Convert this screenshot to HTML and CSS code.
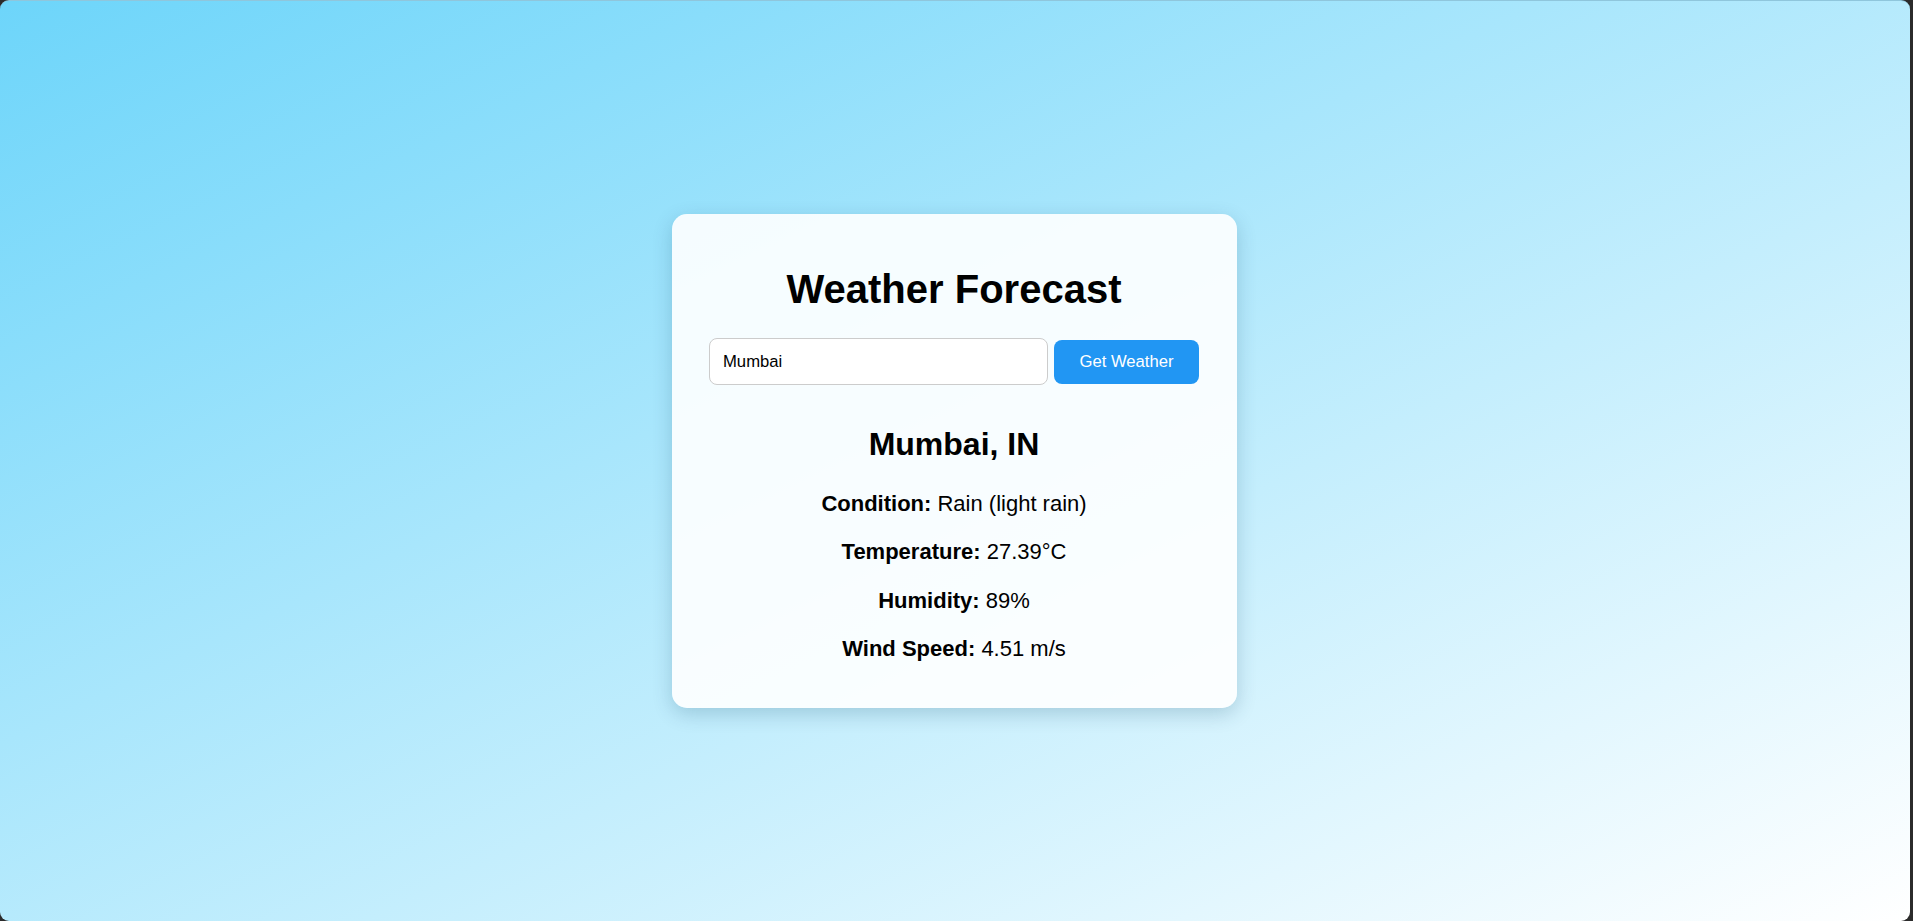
FILE: index.html
```
<!DOCTYPE html>
<html lang="en">
<head>
<meta charset="utf-8">
<title>Weather Forecast</title>
<link rel="stylesheet" href="styles.css">
</head>
<body>
<div class="window">
  <div class="card">
    <h1 class="title">Weather Forecast</h1>
    <div class="search">
      <input class="city" type="text" value="Mumbai">
      <button class="btn" type="button">Get Weather</button>
    </div>
    <div class="result">
      <h2 class="place">Mumbai, IN</h2>
      <p class="row"><strong>Condition:</strong> Rain (light rain)</p>
      <p class="row"><strong>Temperature:</strong> 27.39°C</p>
      <p class="row"><strong>Humidity:</strong> 89%</p>
      <p class="row"><strong>Wind Speed:</strong> 4.51 m/s</p>
    </div>
  </div>
</div>
</body>
</html>
```
FILE: styles.css
```
html, body {
  margin: 0;
  padding: 0;
  background: #2b2b2b;
  overflow: hidden;
}

body {
  font-family: "Liberation Sans", Arial, sans-serif;
  color: #000;
}

.window {
  box-sizing: border-box;
  width: 1910px;
  height: 921px;
  padding-right: 2px;
  border-radius: 9px;
  border-top: 1px solid #8fc6dc;
  background: linear-gradient(to bottom right, #6dd5fa, #ffffff);
  display: flex;
  align-items: center;
  justify-content: center;
}

.card {
  box-sizing: border-box;
  width: 565px;
  padding: 37.5px 37.5px 37.5px;
  background: rgba(255, 255, 255, 0.9);
  border-radius: 15px;
  box-shadow: 0 6px 20px rgba(0, 60, 90, 0.2);
  text-align: center;
}

.title {
  margin: 14.5px 0 26px;
  font-size: 40px;
  line-height: 46px;
  font-weight: bold;
}

.search {
  display: flex;
  align-items: center;
  gap: 6px;
  height: 47px;
}

.city {
  box-sizing: border-box;
  flex: 1;
  height: 47px;
  margin: 0;
  padding: 0 13px;
  border: 1px solid #cccccc;
  border-radius: 8px;
  background: #fff;
  font-family: "Liberation Sans", Arial, sans-serif;
  font-size: 16.67px;
  color: #000;
  outline: none;
}

.btn {
  box-sizing: border-box;
  width: 145px;
  height: 44px;
  margin: 0;
  padding: 0;
  border: none;
  border-radius: 8px;
  background: #2196f3;
  color: #fff;
  font-family: "Liberation Sans", Arial, sans-serif;
  font-size: 16.67px;
}

.result {
  padding-bottom: 8.5px;
}

.place {
  margin: 40.5px 0 28px;
  font-size: 32px;
  line-height: 37px;
  font-weight: bold;
}

.row {
  margin: 22.5px 0 0;
  font-size: 22px;
  line-height: 25.8px;
}

.place + .row {
  margin-top: 0;
}
```
